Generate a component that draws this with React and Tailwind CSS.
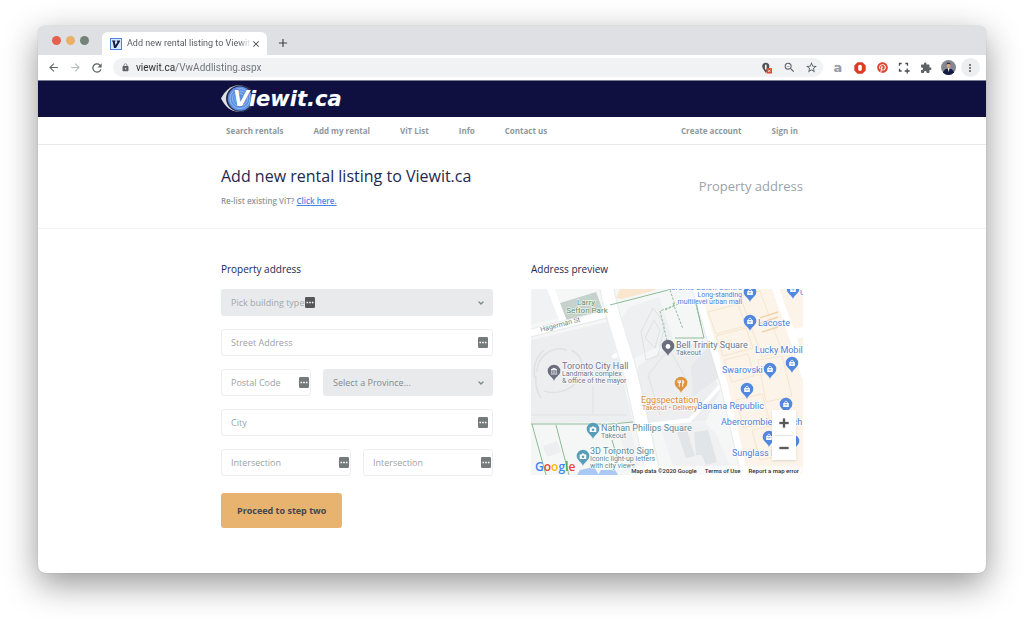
import React from "react";
import {
  MdArrowBack,
  MdArrowForward,
  MdRefresh,
  MdLock,
  MdZoomOut,
  MdStarBorder,
  MdExtension,
  MdMoreVert,
  MdAdd,
  MdClose,
} from "react-icons/md";
import { FaPinterest } from "react-icons/fa";
import { ChevronDown, Minus, Plus } from "lucide-react";

function ToolButton({ label, children }) {
  return (
    <button
      type="button"
      aria-label={label}
      className="flex h-[19px] w-[22px] shrink-0 items-center justify-center"
    >
      {children}
    </button>
  );
}

function Favicon() {
  return (
    <svg viewBox="0 0 12 12" className="size-3 shrink-0" aria-hidden="true">
      <rect x="0.5" y="0.5" width="11" height="11" fill="#dbe8fb" stroke="#4a86e8" />
      <path d="M2 2.5h3.4v1l-.6.2.7 3.6 2-3.6-.7-.2v-1H10v1L6 10H4L2.7 3.6 2 3.4z" fill="#16204a" />
    </svg>
  );
}

function TabBar() {
  return (
    <div className="flex h-[29px] items-end bg-[#dee0e3] pl-[14px]">
      <div className="flex h-[29px] w-[50px] items-center gap-[5px]">
        <span className="size-[9px] rounded-full bg-[#e5604f]" />
        <span className="size-[9px] rounded-full bg-[#e9b06a]" />
        <span className="size-[9px] rounded-full bg-[#748378]" />
      </div>
      <div className="flex h-[23px] w-[165px] items-center rounded-t-md bg-white pl-2 pr-1.5">
        <Favicon />
        <span className="ml-[5px] flex-1 overflow-hidden whitespace-nowrap bg-linear-to-r from-[#50555b] from-90% to-transparent bg-clip-text text-[9px] text-transparent">
          Add new rental listing to Viewit.ca
        </span>
        <button type="button" aria-label="Close tab" className="text-[#3f4347]">
          <MdClose className="size-[10px]" />
        </button>
      </div>
      <button type="button" aria-label="New tab" className="mb-[5px] ml-[9px] text-[#3f4347]">
        <MdAdd className="size-[14px]" />
      </button>
    </div>
  );
}

function Toolbar() {
  return (
    <div className="flex h-[25px] items-center bg-white pr-[5px] pl-1 text-[#5f6368]">
      <ToolButton label="Back">
        <MdArrowBack className="size-[13px]" />
      </ToolButton>
      <ToolButton label="Forward">
        <MdArrowForward className="size-[13px] text-[#b4bbb9]" />
      </ToolButton>
      <ToolButton label="Reload">
        <MdRefresh className="size-[14px]" />
      </ToolButton>
      <div className="ml-[5px] flex h-[19px] flex-1 items-center rounded-full bg-[#f0f2f4] pr-px pl-2">
        <MdLock className="size-[9px]" />
        <input
          aria-label="Address bar"
          defaultValue="viewit.ca/VwAddlisting.aspx"
          className="ml-1.5 min-w-0 flex-1 bg-[linear-gradient(90deg,#26292c_39px,#6b7076_39px)] bg-clip-text text-[10px] text-transparent outline-none"
        />
        <ToolButton label="Location blocked">
          <svg viewBox="0 0 12 12" className="size-3">
            <path
              d="M4.800.8C2.700.8 1.200 2.300 1.200 4.300c0 2.200 1.900 3.700 3.600 6.700C6.500 8 8.400 6.500 8.400 4.300 8.400 2.300 6.900.8 4.800.8z"
              fill="#4e5155"
            />
            <rect x="3.900" y="2.600" width="1.800" height="5" rx="0.900" fill="#f0f2f4" />
            <rect x="5.500" y="6" width="5.500" height="5.500" rx="0.500" fill="#dd4b35" />
            <path d="M7.200 7.700l2.100 2.100M9.300 7.700l-2.100 2.100" stroke="#fff" strokeWidth="0.800" />
          </svg>
        </ToolButton>
        <ToolButton label="Zoom">
          <MdZoomOut className="size-[13px]" />
        </ToolButton>
        <ToolButton label="Bookmark this page">
          <MdStarBorder className="size-[13px]" />
        </ToolButton>
      </div>
      <div className="ml-1 flex items-center">
        <ToolButton label="Shopping assistant">
          <span className="font-['DejaVu_Sans'] text-[13px] leading-none font-bold text-[#959ba6]">a</span>
        </ToolButton>
        <ToolButton label="Ad blocker">
          <svg viewBox="0 0 12 12" className="size-3">
            <path d="M3.600.3h4.800l3.300 3.300v4.800l-3.300 3.300H3.600L.3 8.400V3.600z" fill="#de3a26" />
            <path d="M4.200 4.400c0-.8.800-1.700 1.800-1.700s1.800.9 1.800 1.700v2.700c0 1.200-.8 2-1.800 2s-1.800-.8-1.800-2z" fill="#fff" />
          </svg>
        </ToolButton>
        <ToolButton label="Pinterest">
          <FaPinterest className="size-[11px] text-[#df4430]" />
        </ToolButton>
        <ToolButton label="Capture area">
          <svg viewBox="0 0 12 12" className="size-3" fill="none" stroke="#4a4e53" strokeWidth="1.300">
            <path d="M1.500 3.700V1.500h2.200M7.300 1.500h2.200v2.200M1.500 6.800V9h2.200M9.200 6.500v5M6.700 9h5" />
          </svg>
        </ToolButton>
        <ToolButton label="Extensions">
          <MdExtension className="size-3" />
        </ToolButton>
        <ToolButton label="Profile">
          <svg viewBox="0 0 16 16" className="size-[15px]">
            <circle cx="8" cy="8" r="8" fill="#848892" />
            <path d="M2 13.300C3.500 10 5.500 9 8 9s4.800 1 6 4.300A8 8 0 0 1 2 13.300z" fill="#141a44" />
            <path d="M7 8.500h2.200L8.200 13z" fill="#dfe3ea" />
            <ellipse cx="8" cy="5.800" rx="2" ry="2.700" fill="#d7a177" />
            <path d="M5.800 5C5.800 1.800 10.200 1.800 10.200 5 9 3.800 7 3.800 5.800 5z" fill="#2c2930" />
          </svg>
        </ToolButton>
        <ToolButton label="Menu">
          <span className="flex size-[19px] shrink-0 items-center justify-center rounded-full bg-[#eceef0]">
            <MdMoreVert className="size-3" />
          </span>
        </ToolButton>
      </div>
    </div>
  );
}

function Logo() {
  return (
    <svg viewBox="0 0 122 30" className="h-[30px] w-[122px]" role="img" aria-label="Viewit.ca">
      <path d="M0 14.500C4 7 9 1.500 18 1.200 27 1.500 31 7 34 14 31 22 27 27.500 18 28 9 27.500 4 22 0 14.500z" fill="#dfe2e2" />
      <ellipse cx="19.500" cy="14.600" rx="14.500" ry="13.400" fill="#2a2c4c" />
      <circle cx="19" cy="14.600" r="12.200" fill="#5a8fe6" />
      <g fill="none" stroke="#9cbdf3" strokeWidth="0.900">
        <circle cx="19" cy="14.600" r="10" />
        <circle cx="19" cy="14.600" r="7.500" />
        <circle cx="19" cy="14.600" r="5" />
      </g>
      <text
        x="12"
        y="22"
        className="font-['DejaVu_Sans'] text-[21px] font-bold italic"
        fill="#fff"
        stroke="#2c3f7c"
        strokeWidth="0.600"
        paintOrder="stroke"
      >
        Viewit.ca
      </text>
    </svg>
  );
}

function SiteNav() {
  const main = ["Search rentals", "Add my rental", "ViT List", "Info", "Contact us"];
  const account = ["Create account", "Sign in"];
  return (
    <nav className="border-b border-[#e6e9ea] bg-white">
      <div className="mx-auto flex h-[27px] max-w-[582px] items-center justify-between px-[5px] text-[8px] font-bold text-[#8f989d]">
        <div className="flex gap-[30px]">
          {main.map((item) => (
            <a key={item} href="#">
              {item}
            </a>
          ))}
        </div>
        <div className="flex gap-[30px]">
          {account.map((item) => (
            <a key={item} href="#">
              {item}
            </a>
          ))}
        </div>
      </div>
    </nav>
  );
}

function Dots({ className }) {
  return (
    <svg viewBox="0 0 10 11" aria-hidden="true" className={"pointer-events-none absolute h-[11px] w-[10px] " + className}>
      <rect width="10" height="11" rx="1.200" fill="currentColor" />
      <path d="M1.500 5.500h1.600M4.200 5.500h1.600M6.900 5.500h1.600" stroke="#fff" strokeWidth="1.500" />
    </svg>
  );
}

function Field({ id, label, compact }) {
  return (
    <div className="relative">
      <label htmlFor={id} className="sr-only">
        {label}
      </label>
      <input
        id={id}
        placeholder={label}
        className="block h-[27px] w-full rounded-[3px] border border-[#eceeef] bg-white px-[9px] text-[9px] text-[#4b5563] outline-none placeholder:text-[#9aa3a7]"
      />
      <Dots className={"top-2 text-[#757b7b] " + (compact ? "right-0.5" : "right-[5px]")} />
    </div>
  );
}

function Picker({ id, label, option, tone, children }) {
  return (
    <div className="relative">
      <label htmlFor={id} className="sr-only">
        {label}
      </label>
      <select
        id={id}
        className={"block h-[27px] w-full appearance-none rounded-[3px] bg-[#e8eaec] pr-6 pl-[10px] text-[9px] font-medium outline-none " + tone}
      >
        <option>{option}</option>
      </select>
      {children}
      <ChevronDown
        className="pointer-events-none absolute top-[10px] right-2 size-2 text-[#7d868b]"
        strokeWidth={4}
        aria-hidden="true"
      />
    </div>
  );
}

function AddressForm() {
  return (
    <form onSubmit={(e) => e.preventDefault()}>
      <h2 className="text-[10px] leading-[14px] text-[#23284f]">Property address</h2>
      <div className="mt-[13px] flex flex-col gap-[13px]">
        <Picker id="building" label="Building type" option="Pick building type" tone="text-[#a1a8aa]">
          <Dots className="top-2 left-[84px] text-[#575757]" />
        </Picker>
        <Field id="street" label="Street Address" />
        <div className="grid grid-cols-[90fr_170fr] gap-3">
          <Field id="postal" label="Postal Code" compact />
          <Picker id="province" label="Province" option="Select a Province..." tone="text-[#828b90]" />
        </div>
        <Field id="city" label="City" />
        <div className="grid grid-cols-2 gap-3">
          <Field id="intersection-a" label="Intersection" compact />
          <Field id="intersection-b" label="Intersection" compact />
        </div>
      </div>
      <button
        type="submit"
        className="mt-[17px] h-[35px] rounded-[3px] bg-[#e8b26f] px-4 text-[9px] font-bold text-[#454651]"
      >
        Proceed to step two
      </button>
    </form>
  );
}

const pinGlyphs = {
  bag: (
    <>
      <rect x="-2.800" y="-11" width="5.600" height="4" rx="0.500" fill="#fff" />
      <path d="M-1.500-11c0-2.200 3-2.200 3 0" fill="none" stroke="#fff" strokeWidth="0.900" />
      <path d="M-1.200-10c0 1.500 2.400 1.500 2.400 0" fill="none" stroke="#5388e0" strokeWidth="0.700" />
    </>
  ),
  hall: (
    <path
      d="M-3-11.200L0-12.800l3 1.600zM-2.200-10.500v2.800M0-10.500v2.800M2.200-10.500v2.800M-3.200-7h6.400"
      fill="#fff"
      stroke="#fff"
      strokeWidth="0.800"
    />
  ),
  dot: <circle cx="0" cy="-9.500" r="2.400" fill="#fff" />,
  food: (
    <path
      d="M-1.700-12.800v6.600M-3-12.800v2.400h2.600v-2.400M1.700-6.200v-6.600c1.500.6 1.500 3.300 0 3.800"
      fill="none"
      stroke="#fff"
      strokeWidth="0.900"
    />
  ),
  camera: (
    <>
      <path d="M-3.300-11.500h1.800l.6-1h1.800l.6 1h1.800v4.500h-6.600z" fill="#fff" />
      <circle cx="0" cy="-9.300" r="1.300" fill="#5a9db8" />
    </>
  ),
};

const pins = [
  { x: 750, y: 302, kind: "bag", fill: "#5388e0" },
  { x: 793, y: 299, kind: "bag", fill: "#5388e0" },
  { x: 750, y: 331, kind: "bag", fill: "#5388e0" },
  { x: 792, y: 373, kind: "bag", fill: "#5388e0" },
  { x: 770, y: 379, kind: "bag", fill: "#5388e0" },
  { x: 747, y: 399, kind: "bag", fill: "#5388e0" },
  { x: 786, y: 414, kind: "bag", fill: "#5388e0" },
  { x: 769, y: 447, kind: "bag", fill: "#5388e0" },
  { x: 793, y: 451, kind: "bag", fill: "#5388e0" },
  { x: 668, y: 356, kind: "dot", fill: "#6a6f80" },
  { x: 554, y: 381, kind: "hall", fill: "#6a6f80" },
  { x: 681, y: 393, kind: "food", fill: "#dc9440" },
  { x: 593, y: 439, kind: "camera", fill: "#5a9db8" },
  { x: 583, y: 466, kind: "camera", fill: "#5a9db8" },
];

const blue = "#4a7fe0";
const slate = "#6f7889";
const teal = "#5a8c9c";
const orange = "#de8a34";

const mapLabels = [
  { x: 742, y: 290, text: "Toronto Eaton Centre", fill: blue, size: 8, anchor: "end" },
  { x: 742, y: 297, text: "Long-standing", fill: blue, size: 7, anchor: "end" },
  { x: 742, y: 304, text: "multilevel urban mall", fill: blue, size: 7, anchor: "end" },
  { x: 800, y: 295, text: "U", fill: blue, size: 8 },
  { x: 758, y: 326, text: "Lacoste", fill: blue, size: 9 },
  { x: 755, y: 353, text: "Lucky Mobile", fill: blue, size: 9 },
  { x: 722, y: 373, text: "Swarovski", fill: blue, size: 9 },
  { x: 697, y: 409, text: "Banana Republic", fill: blue, size: 9 },
  { x: 721, y: 425, text: "Abercrombie & Fitch", fill: blue, size: 9 },
  { x: 732, y: 456, text: "Sunglass Hut", fill: blue, size: 9 },
  { x: 676, y: 348, text: "Bell Trinity Square", fill: slate, size: 9 },
  { x: 676, y: 355, text: "Takeout", fill: slate, size: 7 },
  { x: 562, y: 369, text: "Toronto City Hall", fill: slate, size: 9 },
  { x: 562, y: 376, text: "Landmark complex", fill: slate, size: 7 },
  { x: 562, y: 383, text: "& office of the mayor", fill: slate, size: 7 },
  { x: 641, y: 403, text: "Eggspectation", fill: orange, size: 9 },
  { x: 642, y: 410, text: "Takeout • Delivery", fill: orange, size: 7 },
  { x: 601, y: 431, text: "Nathan Phillips Square", fill: teal, size: 9 },
  { x: 601, y: 438, text: "Takeout", fill: teal, size: 7 },
  { x: 590, y: 454, text: "3D Toronto Sign", fill: teal, size: 9 },
  { x: 590, y: 461, text: "Iconic light-up letters", fill: teal, size: 7 },
  { x: 590, y: 468, text: "with city views", fill: teal, size: 7 },
  { x: 586, y: 305, text: "Larry", fill: "#5f9065", size: 8, anchor: "middle" },
  { x: 587, y: 313, text: "Sefton Park", fill: "#5f9065", size: 8, anchor: "middle" },
];

const fontSizes = { 7: "text-[7px]", 8: "text-[8px]", 9: "text-[9px]" };

function MapDrawing() {
  return (
    <svg
      viewBox="531 289 272 186"
      preserveAspectRatio="xMidYMid slice"
      className="block h-full w-full font-[Roboto]"
      role="img"
      aria-label="Map of downtown Toronto"
    >
      <rect x="531" y="289" width="272" height="186" fill="#f5f7f7" />

      {/* city blocks */}
      <g fill="#eceef0">
        <path d="M531 289h22l9 28-31 8z" fill="#f0f2f3" />
        <path d="M531 340l76-18 11 38 15 62-102 1z" />
        <path d="M629 307l30-10 14 42-42 21-12-38z" fill="#eef0f1" />
        <path d="M638 366l30-19 33-4 19 48-14 30-64 5-10-40z" />
        <path d="M660 425l44-3 12 12 18 41h-58z" fill="#eff1f2" />
        <path d="M543 446l14-5 4 11-14 5z" />
        <path d="M618 428l12-1 11 48h-11z" fill="#eff1f2" />
      </g>
      <g fill="#e2e5e7">
        <path d="M677 432l10-2 8 26-9 2zM694 432l14-2 9 32-11 3-4-10h-6z" />
        <path d="M691 366l18-20 12 30-28 20z" fill="#e6e8eb" />
      </g>
      <path d="M560 303l36-11 9 24-42 10z" fill="#c6d1cb" />
      <g fill="none" stroke="#dfe2e4">
        <path d="M641 332l12-24 12 16-7 32-12 4z" />
        <path d="M645 338l9-18 6 10-5 18z" />
        <path
          d="M537 372a23 23 0 0 1 30-22M535 378a28 28 0 0 1 9-28M541 398c-4-6-6-14-5-22M571 350c12 5 15 20 6 32-8 9-22 13-33 9"
          strokeWidth="1.500"
        />
        <path d="M531 415h96M593 386v29" />
        <path d="M668 350l-20 25 12 40M668 347l20 35" />
      </g>

      {/* shopping centre */}
      <path d="M616 298l4-9h34l2 1-34 9z" fill="#fae6cf" />
      <path d="M699 289h104v186h-58l-26-100-20-70z" fill="#fcf4e9" />
      <g fill="none" stroke="#f6e5cf">
        <path d="M708 312l30-8 8 22-30 8zM716 336l30-8 7 20-30 8zM724 360l24-6 6 22-22 6z" />
        <path d="M740 296l20-5 22 60-20 6zM758 360l24-4 10 40-26 6zM736 400l26-6 8 28-26 6zM752 430l28-6 6 30-26 6z" />
        <path d="M760 318l18-6M758 324l20-7M762 332l16-5" strokeWidth="1.500" stroke="#f1d3ae" />
      </g>

      {/* roads */}
      <g fill="none" stroke="#fff">
        <path d="M607 287c4 26 20 64 28 105l18 85" strokeWidth="13" />
        <path d="M529 333l80-20" strokeWidth="7" />
        <path d="M550 287l14 36M556 326l10-3" strokeWidth="7" />
        <path d="M696 289l28 95 21 93" strokeWidth="7" />
        <path d="M775 287l22 62 8 28" strokeWidth="7" />
        <path d="M794 334l10-2" strokeWidth="10" />
        <path d="M613 358c2-5 8-4 17-6" strokeWidth="4" />
        <path d="M640 426l50-6 30-34" strokeWidth="4" />
      </g>
      <g fill="none" stroke="#e3e6e8" strokeWidth="0.800">
        <path d="M600 289c4 30 20 66 28 104l18 82M614 289c4 26 20 64 28 103l19 83M692 289l28 95 21 91" />
        <path d="M531 337l76-19M531 329l72-18" />
      </g>

      {/* paths and water */}
      <g fill="none" stroke="#8dbb96">
        <path d="M610 305l62-16M695 299l9 39h-29M531 424h80l22-2M532 424l14 51M556 425l13 50M612 440l6 20" />
        <path
          d="M670 290l5 15-15 6 8 34M673 303l10 26M665 310l20-9M695 300l6 25"
          strokeDasharray="2.500 1.500"
        />
      </g>
      <path d="M577 475l3-5 14-3 5 8zM598 475l3-5h14l3 5z" fill="#a9c8f3" />

      {pins.map((p) => (
        <g key={p.x + "-" + p.y} transform={"translate(" + p.x + " " + p.y + ")"}>
          <path d="M0 0C-1-4-6.300-5.500-6.300-10a6.300 6.300 0 0 1 12.600 0C6.300-5.500 1-4 0 0z" fill={p.fill} />
          {pinGlyphs[p.kind]}
        </g>
      ))}

      <g stroke="#fff" strokeWidth="1.500" strokeOpacity="0.700" paintOrder="stroke">
        {mapLabels.map((l) => (
          <text
            key={l.x + "-" + l.y}
            x={l.x}
            y={l.y}
            fill={l.fill}
            textAnchor={l.anchor || "start"}
            className={fontSizes[l.size]}
          >
            {l.text}
          </text>
        ))}
        <text transform="translate(541 332) rotate(-15)" fill="#7d8288" className="text-[7px]">
          Hagerman St
        </text>
      </g>
    </svg>
  );
}

function AddressPreview() {
  return (
    <section>
      <h2 className="text-[10px] leading-[14px] text-[#23284f]">Address preview</h2>
      <div className="relative mt-[13px] h-[186px] overflow-hidden font-[Roboto]">
        <MapDrawing />
        <div className="absolute right-[7px] bottom-[15px] flex w-6 flex-col bg-white px-[3px] text-[#5a5a5a] shadow-sm">
          <button type="button" aria-label="Zoom in" className="flex h-[25px] items-center justify-center">
            <Plus className="size-4 shrink-0" strokeWidth={3.5} strokeLinecap="butt" />
          </button>
          <button
            type="button"
            aria-label="Zoom out"
            className="flex h-[25px] items-center justify-center border-t border-[#e6e6e6]"
          >
            <Minus className="size-4 shrink-0" strokeWidth={3.5} strokeLinecap="butt" />
          </button>
        </div>
        <a
          href="#"
          className="absolute bottom-[1px] left-1 font-['Open_Sans'] text-[12px] leading-[15px] font-semibold"
        >
          <span className="text-[#4285f4]">G</span>
          <span className="text-[#ea4335]">o</span>
          <span className="text-[#fbbc05]">o</span>
          <span className="text-[#4285f4]">g</span>
          <span className="text-[#34a853]">l</span>
          <span className="text-[#ea4335]">e</span>
        </a>
        <div className="absolute right-0 bottom-0 flex gap-2 bg-white/60 pr-1 pl-px text-[6px] leading-[9px] font-medium text-[#2f2f2f]">
          <span>Map data ©2020 Google</span>
          <a href="#">Terms of Use</a>
          <a href="#">Report a map error</a>
        </div>
      </div>
    </section>
  );
}

export default function App() {
  return (
    <div className="min-h-screen bg-white px-[38px] pt-[26px] pb-[51px] font-['Open_Sans',sans-serif]">
      <div className="overflow-hidden rounded-[7px] bg-white shadow-[0_11px_34px_rgba(0,0,0,0.42),0_0_1px_rgba(0,0,0,0.4)]">
        <div className="font-[Roboto,sans-serif]">
          <TabBar />
          <Toolbar />
        </div>
        <header className="border-t border-[#7c7f94] bg-[#0f0f40]">
          <div className="mx-auto flex h-9 max-w-[582px] items-center">
            <a href="#">
              <Logo />
            </a>
          </div>
        </header>
        <SiteNav />
        <div className="border-b border-[#f0f2f3]">
          <div className="mx-auto flex h-[83px] max-w-[582px] items-center justify-between">
            <div className="pb-[3px]">
              <h1 className="text-[16px] leading-[22px] text-[#23284f]">Add new rental listing to Viewit.ca</h1>
              <p className="mt-2 text-[8px] leading-[11px] font-semibold text-[#8f989d]">
                Re-list existing ViT?{" "}
                <a href="#" className="text-[#4a86e8] underline">
                  Click here.
                </a>
              </p>
            </div>
            <p className="text-[13px] text-[#9aa2ab]">Property address</p>
          </div>
        </div>
        <main className="mx-auto grid max-w-[582px] grid-cols-2 gap-[38px] pt-[33px] pb-[45px]">
          <AddressForm />
          <AddressPreview />
        </main>
      </div>
    </div>
  );
}
